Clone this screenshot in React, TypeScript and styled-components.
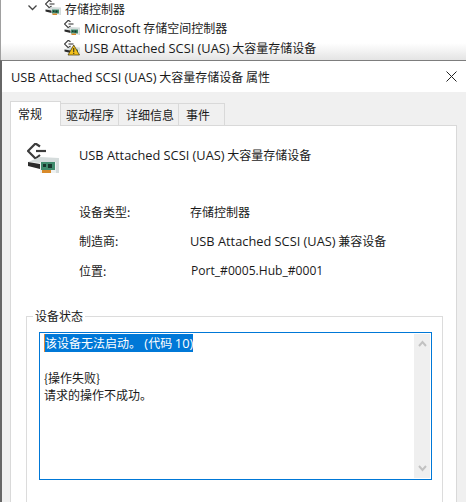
import styled, { createGlobalStyle } from "styled-components"

const Global = createGlobalStyle`
  html, body { margin: 0; padding: 0; background: #fff; }
  body {
    width: 466px;
    height: 502px;
    overflow: hidden;
    font-family: "Noto Sans CJK SC", "Open Sans", sans-serif;
    font-size: 12px;
    color: #1a1a1a;
  }
`

const Page = styled.div`
  width: 466px;
  height: 502px;
  display: flex;
  flex-direction: column;
  overflow: hidden;
`

// latin runs are a little wider than the CJK ones in the reference
const Latin = styled.span`
  font-family: "Open Sans", sans-serif;
  font-size: 12.8px;
`

const PortText = styled(Latin)`
  font-size: 12.1px;
  margin-left: 1px;
`

const Tree = styled.div`
  height: 60px;
  flex: none;
  box-sizing: border-box;
  border-left: 1px solid #a0a0a0;
  overflow: hidden;
  background: linear-gradient(#fff 72%, #e4e4e4 100%);
`

const TreeList = styled.div`
  margin-top: -2px;
`

const TreeRow = styled.div<{ $indent: number }>`
  height: 20px;
  display: flex;
  align-items: center;
  gap: 4px;
  padding-left: ${p => p.$indent}px;
  white-space: nowrap;
`

const Chevron = styled.svg`
  width: 9px;
  height: 6px;
  margin-right: 4px;
`

const Dialog = styled.div`
  flex: 1;
  display: flex;
  flex-direction: column;
  border-top: 1px solid #7d7d7d;
  border-left: 2px solid #666;
  background: #fff;
  min-height: 0;
`

const TitleBar = styled.div`
  height: 31px;
  flex: none;
  padding: 0 9px 0 9px;
  display: flex;
  align-items: center;
  justify-content: space-between;
  white-space: nowrap;
`

const CloseIcon = styled.svg`
  width: 11px;
  height: 11px;
`

const Body = styled.div`
  flex: 1;
  background: #f0f0f0;
  padding: 9px 9px 0 8px;
  min-height: 0;
  display: flex;
  flex-direction: column;
`

const Tabs = styled.div`
  display: flex;
  align-items: flex-end;
  height: 25px;
  flex: none;
  margin-bottom: -1px;
  position: relative;
  z-index: 1;
`

const Tab = styled.div<{ $active?: boolean; $width: number; $pad: number }>`
  width: ${p => p.$width}px;
  height: ${p => (p.$active ? 25 : 23)}px;
  box-sizing: border-box;
  padding-left: ${p => p.$pad}px;
  padding-bottom: ${p => (p.$active ? 2 : 0)}px;
  display: flex;
  align-items: center;
  background: ${p => (p.$active ? "#fff" : "#f0f0f0")};
  border: 1px solid #d9d9d9;
  border-bottom: ${p => (p.$active ? "none" : "1px solid #d9d9d9")};
  border-left: ${p => (p.$active ? "1px solid #d9d9d9" : "none")};
  white-space: nowrap;
`

const Panel = styled.div`
  flex: 1;
  background: #fff;
  border: 1px solid #d9d9d9;
  border-bottom: none;
  padding: 17px 13px 0 16px;
  min-height: 0;
  display: flex;
  flex-direction: column;
`

const DeviceHead = styled.div`
  display: flex;
  align-items: flex-start;
  height: 32px;
  gap: 20px;
`

const DeviceName = styled.div`
  margin-top: 4px;
  height: 16px;
  line-height: 16px;
  white-space: nowrap;
`

const Props = styled.div`
  margin: 28px 0 0 52px;
  display: grid;
  grid-template-columns: 111px 1fr;
  row-gap: 13.5px;
  grid-auto-rows: 16px;
  align-items: center;
  white-space: nowrap;
`

const Group = styled.fieldset`
  margin: 30px 0 0 -1px;
  padding: 8px 10px 0 12px;
  border: 1px solid #dcdcdc;
  border-bottom: none;
  min-width: 0;
  flex: 1;
`

const GroupLabel = styled.legend`
  padding: 0 2px;
  margin-left: -6px;
  line-height: 16px;
`

const StatusBox = styled.div`
  height: 148px;
  box-sizing: border-box;
  border: 1px solid #0078d7;
  padding: 1px 17px 0 4px;
  position: relative;
  line-height: 17px;
`

const Selected = styled.span`
  background: #0078d7;
  color: #fff;
  display: inline-block;
  height: 18px;
  line-height: 18px;
  border-left: 1px solid #e08a3a;
  white-space: nowrap;
`

const Line = styled.div<{ $gap?: number }>`
  margin-top: ${p => p.$gap ?? 0}px;
`

const Scroll = styled.div`
  position: absolute;
  top: 1px;
  right: 1px;
  bottom: 1px;
  width: 16px;
  background: #efefef;
  display: flex;
  flex-direction: column;
  justify-content: space-between;
  align-items: center;
  padding: 6px 0;
  box-sizing: border-box;
`

const Arrow = styled.svg`
  width: 9px;
  height: 7px;
`

const DriveIcon = ({ size, warn }: { size: number; warn?: boolean }) => (
  <svg width={size} height={size} viewBox="0 0 32 32" style={{ flex: "none" }}>
    <path d="M13 3.5 L8.5 0.5 L1 8 L8.5 15.5 L13 12" fill="none" stroke="#3c3c3c" strokeWidth="2.2" />
    <path d="M9 8 H19" fill="none" stroke="#3c3c3c" strokeWidth="2.2" />
    <path d="M1 19 L13 14 L32 15 V30 L28 30 V19 L13 20 Z" fill="#d5dcdc" />
    <path d="M13 19 H29 V30 H13 Z" fill="#eef1f1" />
    <path d="M1 19 L13 21 V26 L1 23 Z" fill="#2b2b2b" />
    <path d="M14 19 H28 V27 H14 Z" fill="#3f8a6c" />
    <path d="M16 21 H19 V24 H16 Z M21 21 H25 V25 H21 Z" fill="#17352c" />
    <path d="M15 27 H24 V30 H15 Z" fill="#d88a2a" />
    {warn && <path d="M19.5 10 L31 30 H8 Z" fill="#f3c11b" stroke="#4a3d10" strokeWidth="1.5" />}
    {warn && <path d="M18.5 16 H20.5 V24 H18.5 Z M18.5 25.5 H20.5 V28 H18.5 Z" fill="#222" />}
  </svg>
)

const App = () => (
  <Page>
    <Global />
    <Tree>
      <TreeList>
        <TreeRow $indent={27}>
          <Chevron viewBox="0 0 9 6"><path d="M0.5 0.5 L4.5 4.5 L8.5 0.5" fill="none" stroke="#444" strokeWidth="1.3" /></Chevron>
          <DriveIcon size={16} />
          <span>存储控制器</span>
        </TreeRow>
        <TreeRow $indent={63}>
          <DriveIcon size={16} />
          <span><Latin>Microsoft</Latin> 存储空间控制器</span>
        </TreeRow>
        <TreeRow $indent={63}>
          <DriveIcon size={16} warn />
          <span><Latin>USB Attached SCSI (UAS)</Latin> 大容量存储设备</span>
        </TreeRow>
      </TreeList>
    </Tree>
    <Dialog>
      <TitleBar>
        <span><Latin>USB Attached SCSI (UAS)</Latin> 大容量存储设备 属性</span>
        <CloseIcon viewBox="0 0 11 11"><path d="M0.5 0.5 L10.5 10.5 M10.5 0.5 L0.5 10.5" stroke="#222" strokeWidth="1" /></CloseIcon>
      </TitleBar>
      <Body>
        <Tabs>
          <Tab $active $width={51} $pad={7}>常规</Tab>
          <Tab $width={58} $pad={5}>驱动程序</Tab>
          <Tab $width={60} $pad={7}>详细信息</Tab>
          <Tab $width={46} $pad={7}>事件</Tab>
        </Tabs>
        <Panel>
          <DeviceHead>
            <DriveIcon size={32} />
            <DeviceName><Latin>USB Attached SCSI (UAS)</Latin> 大容量存储设备</DeviceName>
          </DeviceHead>
          <Props>
            <span>设备类型:</span><span>存储控制器</span>
            <span>制造商:</span><span><Latin>USB Attached SCSI (UAS)</Latin> 兼容设备</span>
            <span>位置:</span><span><PortText>Port_#0005.Hub_#0001</PortText></span>
          </Props>
          <Group>
            <GroupLabel>设备状态</GroupLabel>
            <StatusBox>
              <Selected>该设备无法启动。<Latin>{"\u00a0("}</Latin>代码 <Latin>10)</Latin></Selected>
              <Line $gap={17}>{"{操作失败}"}</Line>
              <Line>请求的操作不成功。</Line>
              <Scroll>
                <Arrow viewBox="0 0 9 7"><path d="M1 6 L4.5 2 L8 6" fill="none" stroke="#c2c2c2" strokeWidth="2" /></Arrow>
                <Arrow viewBox="0 0 9 7"><path d="M1 1 L4.5 5 L8 1" fill="none" stroke="#c2c2c2" strokeWidth="2" /></Arrow>
              </Scroll>
            </StatusBox>
          </Group>
        </Panel>
      </Body>
    </Dialog>
  </Page>
)

export default App
